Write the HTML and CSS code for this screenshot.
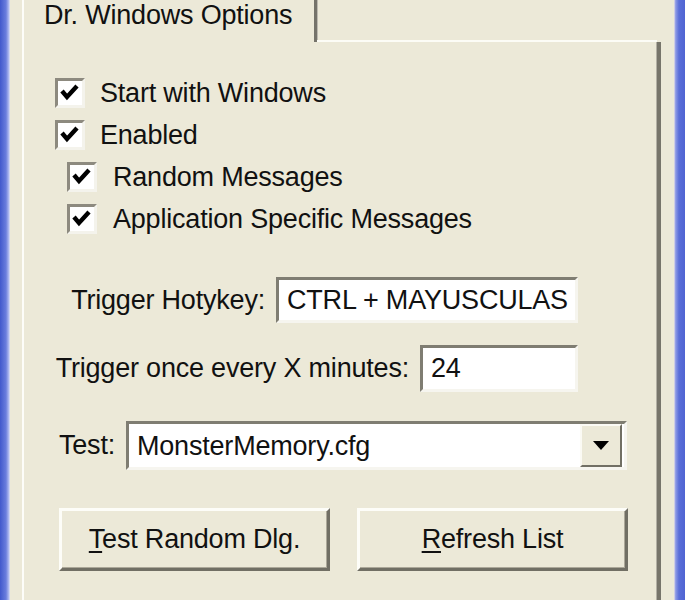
FILE: index.html
```html
<!DOCTYPE html>
<html lang="en">

<head>
    <meta charset="UTF-8">
    <meta name="viewport" content="width=device-width, initial-scale=1.0">
    <title>Dr. Windows Options</title>
    <link rel="stylesheet" href="styles.css">
</head>

<body>
    <div class="desk">
        <div class="frame_edge edge_left"></div>
        <div class="window">
            <div class="tabs">
                <div class="tab">Dr. Windows Options</div>
                <div class="tab_rest"></div>
            </div>
            <div class="page">
                <label class="check">
                    <span class="box"><svg viewBox="0 0 24 24"><polyline points="4,10 9,16 19,5"></polyline></svg></span>
                    Start with Windows
                </label>
                <label class="check">
                    <span class="box"><svg viewBox="0 0 24 24"><polyline points="4,10 9,16 19,5"></polyline></svg></span>
                    Enabled
                </label>
                <label class="check sub">
                    <span class="box"><svg viewBox="0 0 24 24"><polyline points="4,10 9,16 19,5"></polyline></svg></span>
                    Random Messages
                </label>
                <label class="check sub">
                    <span class="box"><svg viewBox="0 0 24 24"><polyline points="4,10 9,16 19,5"></polyline></svg></span>
                    Application Specific Messages
                </label>

                <div class="field field_hotkey">
                    <span class="field_label">Trigger Hotykey:</span>
                    <div class="edit">CTRL + MAYUSCULAS</div>
                </div>
                <div class="field field_minutes">
                    <span class="field_label">Trigger once every X minutes:</span>
                    <div class="edit">24</div>
                </div>
                <div class="field field_test">
                    <span class="field_label">Test:</span>
                    <div class="edit combo">
                        <span class="combo_val">MonsterMemory.cfg</span>
                        <span class="combo_btn"><svg viewBox="0 0 16 10"><polygon points="0,0 16,0 8,9"></polygon></svg></span>
                    </div>
                </div>

                <div class="buttons">
                    <button><u>T</u>est Random Dlg.</button>
                    <button><u>R</u>efresh List</button>
                </div>
            </div>
        </div>
        <div class="frame_edge edge_right"></div>
    </div>
</body>

</html>
```

FILE: styles.css
```css
* {
    margin: 0;
    padding: 0;
    box-sizing: border-box;
}

html,
body {
    width: 100%;
    height: 100%;
    overflow: hidden;
    background-color: #ece9d8;
}

.desk {
    display: flex;
    width: 685px;
    height: 600px;
    font-family: "Liberation Sans", Arial, sans-serif;
    font-size: 27px;
    letter-spacing: -0.2px;
    color: #111;
}

/* blue window frame */
.frame_edge {
    height: 100%;
}

.edge_left {
    width: 10px;
    background: linear-gradient(to right, #4158cc 0%, #6a7ddd 60%, #a9b4ee 85%, #dfe2f4 100%);
}

.edge_right {
    width: 11px;
    background: linear-gradient(to right, #e9e3e6 0%, #8d9ae6 15%, #5a6ed8 45%, #5064d2 100%);
}

.window {
    flex: 1;
    display: flex;
    flex-direction: column;
    padding-left: 12px;
    padding-right: 13px;
}

/* tab strip */
.tabs {
    display: flex;
    height: 42px;
}

.tab {
    width: 295px;
    height: 42px;
    padding-left: 20px;
    line-height: 30px;
    border-left: 2px solid #fdfdf9;
    border-right: 3px solid #75736a;
    box-shadow: 1px 0 0 #bdbab0;
}

.tab_rest {
    flex: 1;
    margin-right: 4px;
    border-bottom: 2px solid #fcfcf6;
}

/* tab page */
.page {
    flex: 1;
    padding-top: 36px;
    border-left: 2px solid #fdfdf9;
    border-right: 4px solid #77756b;
    box-shadow: inset -1px 0 0 #b3b0a5;
}

.check {
    display: flex;
    align-items: center;
    height: 30px;
    margin-left: 31px;
    gap: 15px;
}

.check + .check {
    margin-top: 12px;
}

.check.sub {
    margin-left: 43px;
    gap: 16px;
}

.box {
    width: 30px;
    height: 30px;
    background-color: #fff;
    border-style: solid;
    border-width: 3px;
    border-color: #8d8a7f #f4f3ec #f4f3ec #8d8a7f;
}

.box svg {
    display: block;
    width: 24px;
    height: 24px;
}

.box polyline {
    fill: none;
    stroke: #000;
    stroke-width: 4.4;
}

/* labelled edit boxes */
.field {
    display: flex;
    align-items: center;
    gap: 11px;
}

.field_label {
    text-align: right;
    white-space: nowrap;
}

.edit {
    height: 46px;
    padding-left: 8px;
    line-height: 40px;
    background-color: #fff;
    border-style: solid;
    border-width: 3px;
    border-color: #7f7d72 #f6f5ef #f6f5ef #7f7d72;
}

.field_hotkey {
    margin-top: 43px;
}

.field_hotkey .field_label {
    width: 241px;
}

.field_hotkey .edit {
    width: 302px;
}

.field_minutes {
    margin-top: 22px;
}

.field_minutes .field_label {
    width: 385px;
}

.field_minutes .edit {
    width: 158px;
    height: 47px;
}

.field_test {
    margin-top: 29px;
}

.field_test .field_label {
    width: 91px;
}

.combo {
    display: flex;
    align-items: center;
    width: 501px;
    height: 49px;
    padding-right: 2px;
}

.combo_val {
    flex: 1;
}

.combo_btn {
    display: flex;
    align-items: center;
    justify-content: center;
    width: 42px;
    height: 43px;
    background-color: #ece9d8;
    border-style: solid;
    border-width: 2px;
    border-color: #fbfaf4 #716f64 #716f64 #fbfaf4;
}

.combo_btn svg {
    width: 16px;
    height: 10px;
}

/* push buttons */
.buttons {
    display: flex;
    gap: 27px;
    margin-top: 38px;
    margin-left: 35px;
}

.buttons button {
    width: 271px;
    height: 63px;
    font-family: inherit;
    font-size: 27px;
    letter-spacing: inherit;
    color: #111;
    background-color: #ece9d8;
    border-style: solid;
    border-width: 3px;
    border-color: #fdfdf8 #716f64 #716f64 #fdfdf8;
    box-shadow: inset -1px -1px 0 #aca899;
}

.buttons u {
    text-underline-offset: 3px;
}
```
